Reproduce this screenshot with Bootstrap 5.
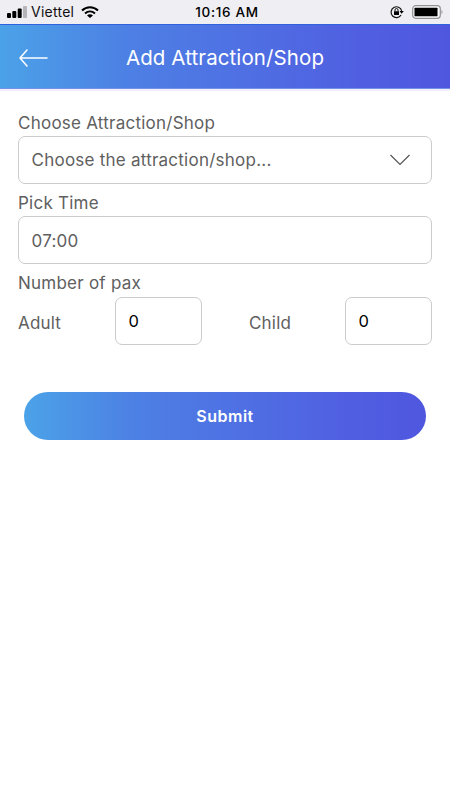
<!DOCTYPE html>
<html lang="en">
<head>
<meta charset="utf-8">
<meta name="viewport" content="width=device-width, initial-scale=1">
<title>Add Attraction/Shop</title>
<link href="https://cdn.jsdelivr.net/npm/bootstrap@5.3.0/dist/css/bootstrap.min.css" rel="stylesheet">
<style>
body { font-family: Inter, "Liberation Sans", sans-serif; font-size: 17px; color: #606060; background: #fff; }
.status-bar { height: 24px; padding: 0 7px; background: #efeef3; color: #111; font-size: 14px; line-height: 24px; }
.status-side { flex: 1 1 0; }
.carrier { letter-spacing: .25px; margin: 0 7px 0 4px; }
.clock { font-weight: 500; font-size: 13.5px; letter-spacing: .7px; color: #000; padding-left: 4px; }
.brand-fill { background: linear-gradient(90deg, #4ba2e8 0%, #4d80e4 28%, #4f6fe3 55%, #505fe1 80%, #4f57df 100%); }
.top-bar { height: 65px; padding: 0 18px; border-top: 1px solid #2f62dc; border-bottom: 1px solid #7690ec; }
.top-edge { height: 2px; background: #efeefa; }
.top-title { font-size: 20.5px; font-weight: 400; letter-spacing: .1px; color: #fff; padding-top: 3px; }
.back-slot { width: 30px; padding-top: 2px; }
.entry-form { padding: 12.6px 18px 0; }
.field-label { height: 32.4px; padding-top: 6px; line-height: 26px; letter-spacing: .24px; }
.entry-form .form-control { height: 48px; border: 1px solid #cbcbcb; border-radius: 7px; padding: 1px 20px 0 12.5px; font-size: 17px; letter-spacing: .24px; color: #606060; background: #fff; }
.entry-form .pax-input { width: 87px; color: #000; font-size: 16.5px; }
.pax-label { padding-top: 6px; letter-spacing: .2px; }
.adult-label { width: 97px; }
.child-label { width: 96px; }
.submit-btn { height: 48px; margin: 47.6px 6px 0; border: 0; padding: 0 0 1px; color: #fff; font-size: 16px; font-weight: 600; letter-spacing: .5px; }
</style>
<script src="https://cdn.jsdelivr.net/npm/bootstrap@5.3.0/dist/js/bootstrap.bundle.min.js"></script>
</head>
<body>
<div class="status-bar d-flex align-items-center">
  <div class="status-side d-flex align-items-center">
    <svg width="20" height="12" viewBox="0 0 20 12"><rect x="0" y="7" width="4" height="5" rx="1"/><rect x="5.3" y="5" width="4" height="7" rx="1"/><rect x="10.7" y="2.5" width="4" height="9.5" rx="1"/><rect x="16" y="0" width="4" height="12" rx="1" fill="#b5b5b9"/></svg>
    <span class="carrier">Viettel</span>
    <svg width="18" height="12" viewBox="0 0 18 12"><g fill="none" stroke="#000" stroke-width="2"><path d="M1 4.5C5.5 0 12.500 0 17 4.500"/><path d="M4 7.500C7 4.700 11 4.700 14 7.500"/></g><path d="M6 9.500C7.800 7.900 10.200 7.900 12 9.500L9 12Z"/></svg>
  </div>
  <div class="clock">10:16 AM</div>
  <div class="status-side d-flex align-items-center justify-content-end gap-2">
    <svg width="14" height="14" viewBox="0 0 14 14"><path d="M11.100 10A5.400 5.400 0 1 1 11.700 5.800" fill="none" stroke="#111" stroke-width="1.200"/><path d="M9.500 6H13.800L11.600 8.800Z"/><rect x="4" y="6.200" width="5" height="3.800" rx=".4"/><path d="M5 6.500V5A1.500 1.500 0 0 1 8 5V6.500" fill="none" stroke="#111"/></svg>
    <svg width="31" height="14" viewBox="0 0 31 14"><rect x=".7" y=".7" width="27.600" height="12.600" rx="3" fill="#f8f8fa" stroke="#929296" stroke-width="1.200"/><rect x="2.500" y="2.700" width="23" height="8.600" rx=".5"/><path d="M29.500 4.700Q31.500 7 29.500 9.300Z" fill="#929296"/></svg>
  </div>
</div>
<header class="top-bar brand-fill d-flex align-items-center justify-content-between">
  <a href="#" class="back-slot d-flex" aria-label="Back"><svg width="30" height="18" viewBox="0 0 30 18" fill="none" stroke="#fff" stroke-width="1.500" stroke-linecap="round" stroke-linejoin="round"><path d="M9 1L2 9L9 17M2 9H29"/></svg></a>
  <h1 class="top-title mb-0">Add Attraction/Shop</h1>
  <span class="back-slot"></span>
</header>
<div class="top-edge"></div>
<form class="entry-form d-flex flex-column">
  <label class="field-label">Choose Attraction/Shop</label>
  <div class="form-control d-flex align-items-center justify-content-between" role="button">
    <span>Choose the attraction/shop...</span>
    <svg width="22" height="12" viewBox="0 0 22 12" fill="none" stroke="#555" stroke-width="1.200"><path d="M1.500 1L11 10.500L20.500 1"/></svg>
  </div>
  <label class="field-label" for="time">Pick Time</label>
  <input id="time" class="form-control" type="text" value="07:00">
  <label class="field-label">Number of pax</label>
  <div class="d-flex justify-content-between">
    <div class="d-flex align-items-center">
      <label class="pax-label adult-label" for="adult">Adult</label>
      <input id="adult" class="form-control pax-input" type="text" value="0">
    </div>
    <div class="d-flex align-items-center">
      <label class="pax-label child-label" for="child">Child</label>
      <input id="child" class="form-control pax-input" type="text" value="0">
    </div>
  </div>
  <button type="button" class="submit-btn brand-fill btn rounded-pill">Submit</button>
</form>
</body>
</html>
